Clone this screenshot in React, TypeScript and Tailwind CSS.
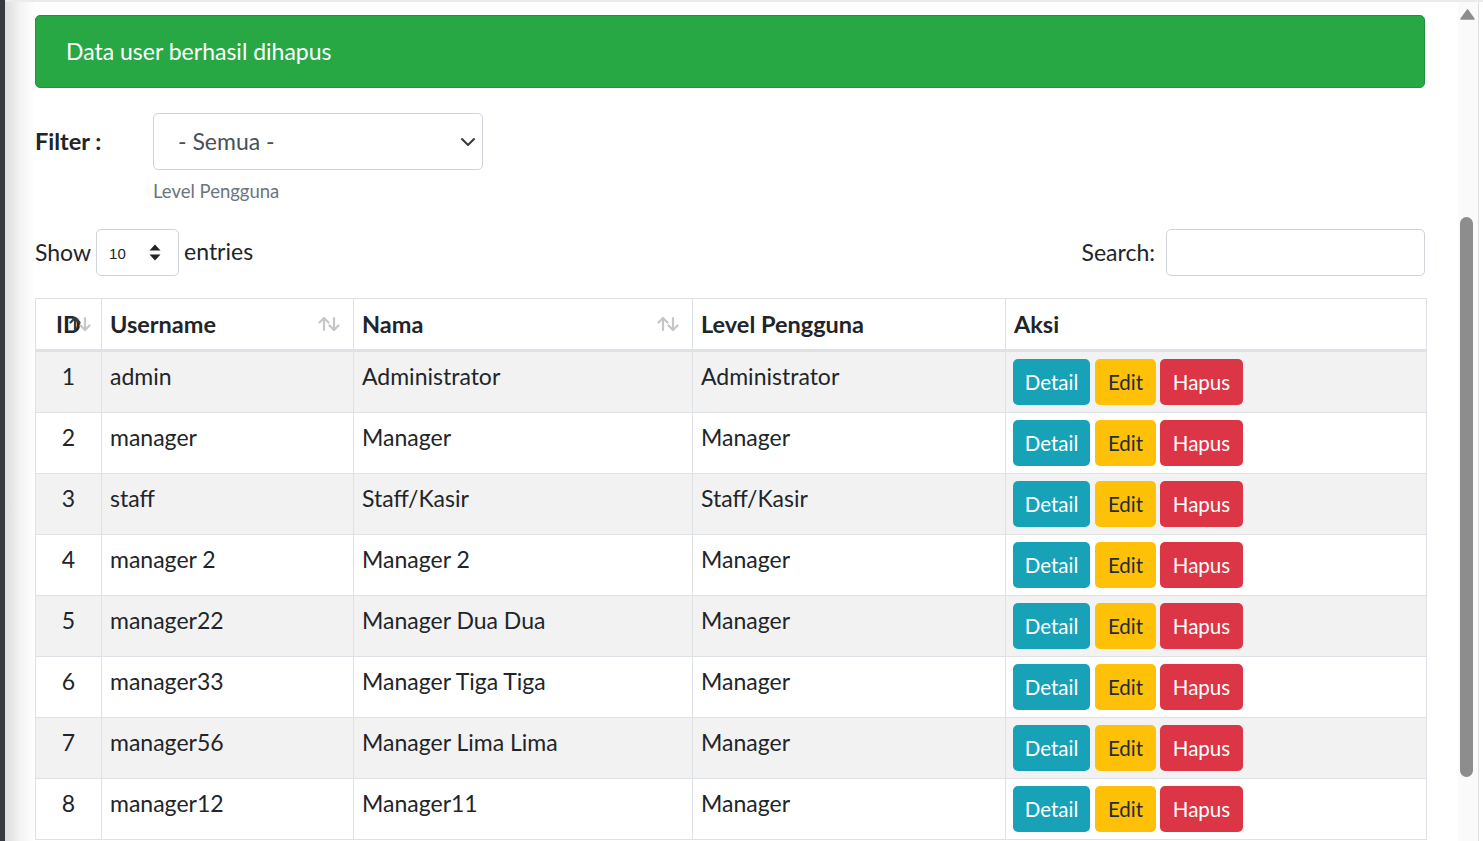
import React from "react";

const rows = [
  { id: 1, u: "admin", n: "Administrator", l: "Administrator" },
  { id: 2, u: "manager", n: "Manager", l: "Manager" },
  { id: 3, u: "staff", n: "Staff/Kasir", l: "Staff/Kasir" },
  { id: 4, u: "manager 2", n: "Manager 2", l: "Manager" },
  { id: 5, u: "manager22", n: "Manager Dua Dua", l: "Manager" },
  { id: 6, u: "manager33", n: "Manager Tiga Tiga", l: "Manager" },
  { id: 7, u: "manager56", n: "Manager Lima Lima", l: "Manager" },
  { id: 8, u: "manager12", n: "Manager11", l: "Manager" },
];

function SortIcon() {
  return (
    <svg width="22" height="16" viewBox="0 0 22 16" className="absolute right-[13px] top-1/2 -translate-y-1/2">
      <g fill="none" strokeWidth="2.2" strokeLinecap="round" strokeLinejoin="round" stroke="#c6c6c6">
        <path d="M6 14V2" />
        <path d="M1.5 6.5L6 2l4.5 4.5" />
        <path d="M16 2v12" />
        <path d="M11.5 9.5L16 14l4.5-4.5" />
      </g>
    </svg>
  );
}

export default function App() {
  return (
    <div className="flex h-[841px] w-[1483px] overflow-hidden bg-white font-['Lato',sans-serif] text-[#212529]">
      <div className="w-[5px] shrink-0 bg-[#343a40]" />
      <div className="flex flex-1 border-t-2 border-[#ebebeb]">
        <div className="w-[30px] shrink-0 bg-gradient-to-r from-[#dcdcdc] via-[#f3f3f3] to-white" />
        <div className="flex w-[1391px] shrink-0 flex-col pt-[13px]">
          <div className="flex h-[73px] w-[1390px] shrink-0 items-center rounded-[5px] border border-[#23923d] bg-[#28a745] pl-[30px] text-[23px] text-white">
            Data user berhasil dihapus
          </div>

          <div className="mt-[25px] flex shrink-0 items-center">
            <div className="w-[118px] text-[23.5px] font-bold">Filter :</div>
            <div className="flex h-[57px] w-[330px] items-center justify-between rounded-[5px] border border-[#ced4da] pl-[24px] pr-[6px] text-[23px] text-[#495057]">
              <span>- Semua -</span>
              <svg width="16" height="10" viewBox="0 0 16 10">
                <path d="M2 2l6 6 6-6" fill="none" stroke="#343a40" strokeWidth="2" strokeLinecap="round" strokeLinejoin="round" />
              </svg>
            </div>
          </div>
          <div className="ml-[118px] mt-[9px] shrink-0 text-[18.5px] leading-[24px] text-[#6c757d]">Level Pengguna</div>

          <div className="mt-[26px] flex h-[47px] shrink-0 items-center justify-between pr-[1px]">
            <div className="flex items-center text-[23px]">
              <span>Show</span>
              <div className="ml-[5px] mr-[5px] flex h-[47px] w-[83px] items-center justify-between rounded-[5px] border border-[#ced4da] pl-[12px] pr-[17px] font-['Liberation_Sans',sans-serif] text-[15px]">
                <span className="mt-[3px]">10</span>
                <svg width="12" height="17" viewBox="0 0 12 17">
                  <path d="M6 0.5L11.5 6.5H0.5Z M6 16.5L11.5 10.5H0.5Z" fill="#212529" />
                </svg>
              </div>
              <span className="-mt-[3px]">entries</span>
            </div>
            <div className="flex items-center text-[23px]">
              <span>Search:</span>
              <div className="ml-[11px] h-[47px] w-[259px] rounded-[5px] border border-[#ced4da]" />
            </div>
          </div>

          <table className="mt-[22px] w-[1391px] shrink-0 table-fixed border-collapse border border-[#dee2e6] text-[23px]">
            <colgroup>
              <col className="w-[66px]" />
              <col className="w-[252px]" />
              <col className="w-[339px]" />
              <col className="w-[313px]" />
              <col className="w-[421px]" />
            </colgroup>
            <thead>
              <tr className="border-b-[3px] border-[#dee2e6] text-[23.5px]">
                <th className="relative border-x border-[#dee2e6] px-[8px] pb-[7px] pt-[7px] text-center font-bold leading-[36px]">
                  ID
                  <svg width="22" height="16" viewBox="0 0 22 16" className="absolute left-[33px] top-1/2 -translate-y-1/2">
                    <g fill="none" strokeWidth="2.2" strokeLinecap="round" strokeLinejoin="round">
                      <g stroke="#343a40"><path d="M6 14V2" /><path d="M1.5 6.5L6 2l4.5 4.5" /></g>
                      <g stroke="#c6c6c6"><path d="M16 2v12" /><path d="M11.5 9.5L16 14l4.5-4.5" /></g>
                    </g>
                  </svg>
                </th>
                <th className="relative border-x border-[#dee2e6] px-[8px] pb-[7px] pt-[7px] text-left font-bold leading-[36px]">
                  Username
                  <SortIcon />
                </th>
                <th className="relative border-x border-[#dee2e6] px-[8px] pb-[7px] pt-[7px] text-left font-bold leading-[36px]">
                  Nama
                  <SortIcon />
                </th>
                <th className="border-x border-[#dee2e6] px-[8px] pb-[7px] pt-[7px] text-left font-bold leading-[36px]">Level Pengguna</th>
                <th className="border-x border-[#dee2e6] px-[8px] pb-[7px] pt-[7px] text-left font-bold leading-[36px]">Aksi</th>
              </tr>
            </thead>
            <tbody>
              {rows.map((r, i) => (
                <tr key={r.id} className={`border-t border-[#dee2e6] ${i % 2 === 0 ? "bg-[#f2f2f2]" : "bg-white"}`}>
                  <td className="border-x border-[#dee2e6] px-[8px] py-[7px] text-center align-top leading-[35px]">{r.id}</td>
                  <td className="border-x border-[#dee2e6] px-[8px] py-[7px] align-top leading-[35px]">{r.u}</td>
                  <td className="border-x border-[#dee2e6] px-[8px] py-[7px] align-top leading-[35px]">{r.n}</td>
                  <td className="border-x border-[#dee2e6] px-[8px] py-[7px] align-top leading-[35px]">{r.l}</td>
                  <td className="border-x border-[#dee2e6] px-[7px] py-[7px] align-top text-[20.5px]">
                    <div className="flex h-[46px] items-center">
                      <span className="flex h-[46px] w-[77px] items-center justify-center rounded-[5px] bg-[#17a2b8] text-white">Detail</span>
                      <span className="ml-[5px] flex h-[46px] w-[61px] items-center justify-center rounded-[5px] bg-[#ffc107] text-[#1f2d3d]">Edit</span>
                      <span className="ml-[4px] flex h-[46px] w-[83px] items-center justify-center rounded-[5px] bg-[#dc3545] text-white">Hapus</span>
                    </div>
                  </td>
                </tr>
              ))}
            </tbody>
          </table>
        </div>
        <div className="flex-1" />
        <div className="flex w-[25px] shrink-0">
          <div className="flex w-[20px] flex-col items-start bg-[#fafafa] pl-[2px] pt-[7px]">
            <svg width="15" height="11" viewBox="0 0 15 11">
              <path d="M7.5 1L14 10H1Z" fill="#8d8d8d" stroke="#8d8d8d" strokeWidth="1.5" strokeLinejoin="round" />
            </svg>
            <div className="mt-[197px] h-[560px] w-[13px] shrink-0 rounded-full bg-[#8d8d8d]" />
          </div>
          <div className="w-[1px] bg-[#dedede]" />
          <div className="flex-1 bg-white" />
        </div>
      </div>
    </div>
  );
}
